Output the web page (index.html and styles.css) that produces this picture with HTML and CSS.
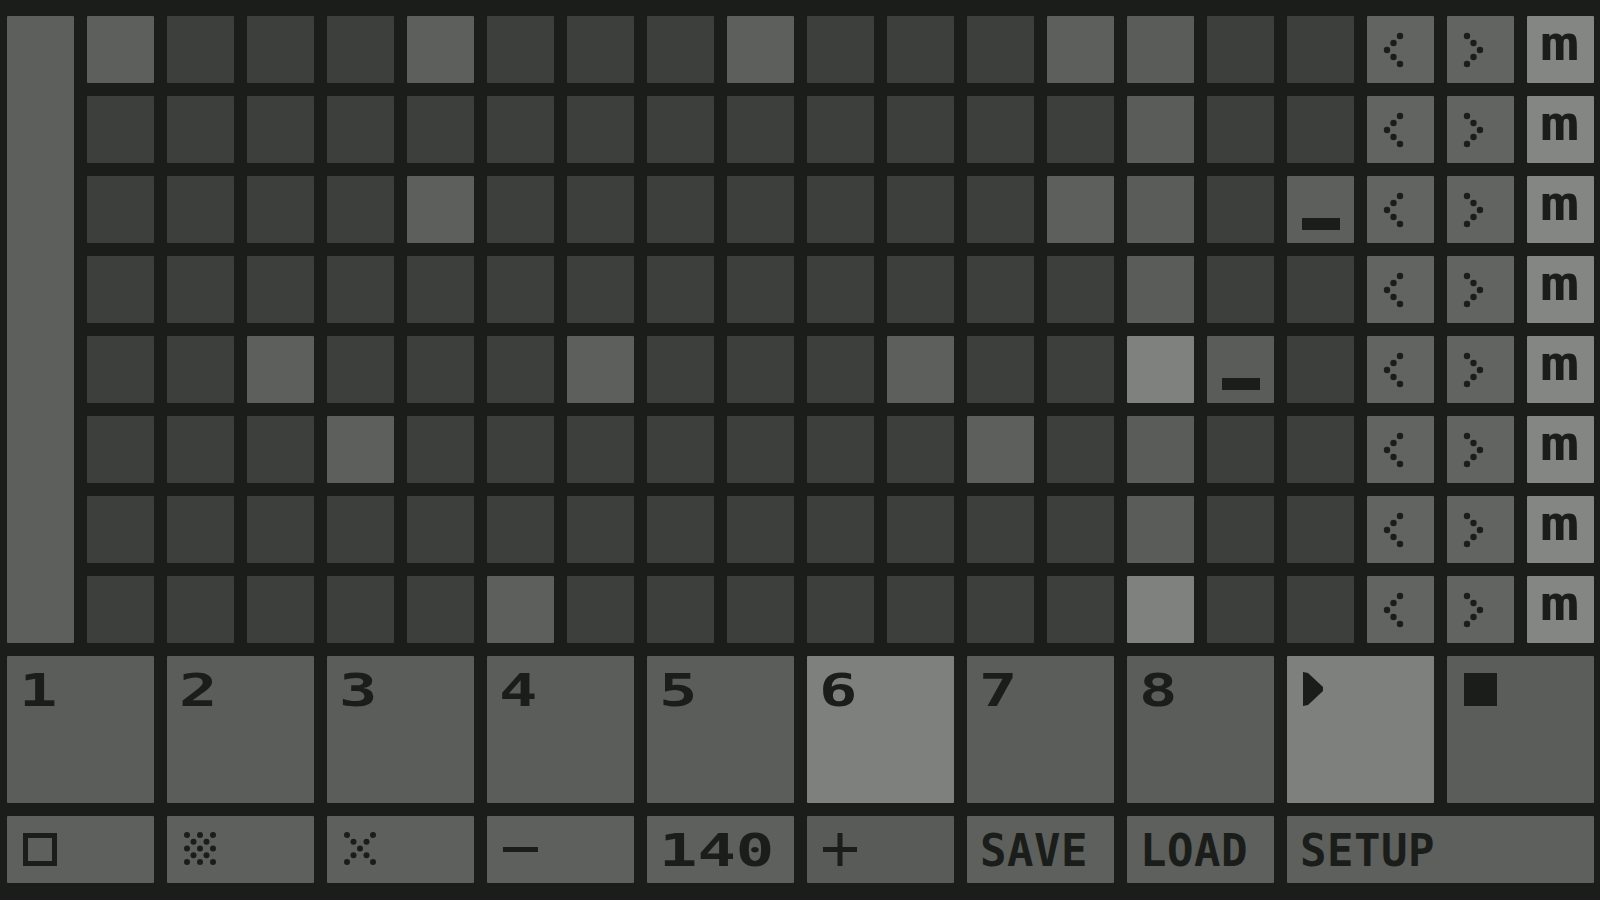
FILE: index.html
```html
<!DOCTYPE html>
<html lang="en">
<head>
<meta charset="utf-8">
<title>Sequencer</title>
<link rel="stylesheet" href="styles.css">
</head>
<body>
<main class="board">
  <div class="bar"></div>

  <!-- row 1 -->
  <div class="c on"></div><div class="c"></div><div class="c"></div><div class="c"></div>
  <div class="c on"></div><div class="c"></div><div class="c"></div><div class="c"></div>
  <div class="c on"></div><div class="c"></div><div class="c"></div><div class="c"></div>
  <div class="c on"></div><div class="c ph"></div><div class="c"></div><div class="c"></div>
  <div class="nav"><svg viewBox="0 0 67 67"><g class="dots"><circle cx="33" cy="20" r="3.2"/><circle cx="26.5" cy="27" r="3.2"/><circle cx="20" cy="34" r="3.2"/><circle cx="26.5" cy="41" r="3.2"/><circle cx="33" cy="48" r="3.2"/></g></svg></div>
  <div class="nav"><svg viewBox="0 0 67 67"><g class="dots"><circle cx="20" cy="20" r="3.2"/><circle cx="26.5" cy="27" r="3.2"/><circle cx="33" cy="34" r="3.2"/><circle cx="26.5" cy="41" r="3.2"/><circle cx="20" cy="48" r="3.2"/></g></svg></div>
  <div class="mute"><span>m</span></div>

  <!-- row 2 -->
  <div class="c"></div><div class="c"></div><div class="c"></div><div class="c"></div>
  <div class="c"></div><div class="c"></div><div class="c"></div><div class="c"></div>
  <div class="c"></div><div class="c"></div><div class="c"></div><div class="c"></div>
  <div class="c"></div><div class="c ph"></div><div class="c"></div><div class="c"></div>
  <div class="nav"><svg viewBox="0 0 67 67"><g class="dots"><circle cx="33" cy="20" r="3.2"/><circle cx="26.5" cy="27" r="3.2"/><circle cx="20" cy="34" r="3.2"/><circle cx="26.5" cy="41" r="3.2"/><circle cx="33" cy="48" r="3.2"/></g></svg></div>
  <div class="nav"><svg viewBox="0 0 67 67"><g class="dots"><circle cx="20" cy="20" r="3.2"/><circle cx="26.5" cy="27" r="3.2"/><circle cx="33" cy="34" r="3.2"/><circle cx="26.5" cy="41" r="3.2"/><circle cx="20" cy="48" r="3.2"/></g></svg></div>
  <div class="mute"><span>m</span></div>

  <!-- row 3 -->
  <div class="c"></div><div class="c"></div><div class="c"></div><div class="c"></div>
  <div class="c on"></div><div class="c"></div><div class="c"></div><div class="c"></div>
  <div class="c"></div><div class="c"></div><div class="c"></div><div class="c"></div>
  <div class="c on"></div><div class="c ph"></div><div class="c"></div><div class="c on"><i class="dash"></i></div>
  <div class="nav"><svg viewBox="0 0 67 67"><g class="dots"><circle cx="33" cy="20" r="3.2"/><circle cx="26.5" cy="27" r="3.2"/><circle cx="20" cy="34" r="3.2"/><circle cx="26.5" cy="41" r="3.2"/><circle cx="33" cy="48" r="3.2"/></g></svg></div>
  <div class="nav"><svg viewBox="0 0 67 67"><g class="dots"><circle cx="20" cy="20" r="3.2"/><circle cx="26.5" cy="27" r="3.2"/><circle cx="33" cy="34" r="3.2"/><circle cx="26.5" cy="41" r="3.2"/><circle cx="20" cy="48" r="3.2"/></g></svg></div>
  <div class="mute"><span>m</span></div>

  <!-- row 4 -->
  <div class="c"></div><div class="c"></div><div class="c"></div><div class="c"></div>
  <div class="c"></div><div class="c"></div><div class="c"></div><div class="c"></div>
  <div class="c"></div><div class="c"></div><div class="c"></div><div class="c"></div>
  <div class="c"></div><div class="c ph"></div><div class="c"></div><div class="c"></div>
  <div class="nav"><svg viewBox="0 0 67 67"><g class="dots"><circle cx="33" cy="20" r="3.2"/><circle cx="26.5" cy="27" r="3.2"/><circle cx="20" cy="34" r="3.2"/><circle cx="26.5" cy="41" r="3.2"/><circle cx="33" cy="48" r="3.2"/></g></svg></div>
  <div class="nav"><svg viewBox="0 0 67 67"><g class="dots"><circle cx="20" cy="20" r="3.2"/><circle cx="26.5" cy="27" r="3.2"/><circle cx="33" cy="34" r="3.2"/><circle cx="26.5" cy="41" r="3.2"/><circle cx="20" cy="48" r="3.2"/></g></svg></div>
  <div class="mute"><span>m</span></div>

  <!-- row 5 -->
  <div class="c"></div><div class="c"></div><div class="c on"></div><div class="c"></div>
  <div class="c"></div><div class="c"></div><div class="c on"></div><div class="c"></div>
  <div class="c"></div><div class="c"></div><div class="c on"></div><div class="c"></div>
  <div class="c"></div><div class="c hot"></div><div class="c ph"><i class="dash"></i></div><div class="c"></div>
  <div class="nav"><svg viewBox="0 0 67 67"><g class="dots"><circle cx="33" cy="20" r="3.2"/><circle cx="26.5" cy="27" r="3.2"/><circle cx="20" cy="34" r="3.2"/><circle cx="26.5" cy="41" r="3.2"/><circle cx="33" cy="48" r="3.2"/></g></svg></div>
  <div class="nav"><svg viewBox="0 0 67 67"><g class="dots"><circle cx="20" cy="20" r="3.2"/><circle cx="26.5" cy="27" r="3.2"/><circle cx="33" cy="34" r="3.2"/><circle cx="26.5" cy="41" r="3.2"/><circle cx="20" cy="48" r="3.2"/></g></svg></div>
  <div class="mute"><span>m</span></div>

  <!-- row 6 -->
  <div class="c"></div><div class="c"></div><div class="c"></div><div class="c on"></div>
  <div class="c"></div><div class="c"></div><div class="c"></div><div class="c"></div>
  <div class="c"></div><div class="c"></div><div class="c"></div><div class="c on"></div>
  <div class="c"></div><div class="c ph"></div><div class="c"></div><div class="c"></div>
  <div class="nav"><svg viewBox="0 0 67 67"><g class="dots"><circle cx="33" cy="20" r="3.2"/><circle cx="26.5" cy="27" r="3.2"/><circle cx="20" cy="34" r="3.2"/><circle cx="26.5" cy="41" r="3.2"/><circle cx="33" cy="48" r="3.2"/></g></svg></div>
  <div class="nav"><svg viewBox="0 0 67 67"><g class="dots"><circle cx="20" cy="20" r="3.2"/><circle cx="26.5" cy="27" r="3.2"/><circle cx="33" cy="34" r="3.2"/><circle cx="26.5" cy="41" r="3.2"/><circle cx="20" cy="48" r="3.2"/></g></svg></div>
  <div class="mute"><span>m</span></div>

  <!-- row 7 -->
  <div class="c"></div><div class="c"></div><div class="c"></div><div class="c"></div>
  <div class="c"></div><div class="c"></div><div class="c"></div><div class="c"></div>
  <div class="c"></div><div class="c"></div><div class="c"></div><div class="c"></div>
  <div class="c"></div><div class="c ph"></div><div class="c"></div><div class="c"></div>
  <div class="nav"><svg viewBox="0 0 67 67"><g class="dots"><circle cx="33" cy="20" r="3.2"/><circle cx="26.5" cy="27" r="3.2"/><circle cx="20" cy="34" r="3.2"/><circle cx="26.5" cy="41" r="3.2"/><circle cx="33" cy="48" r="3.2"/></g></svg></div>
  <div class="nav"><svg viewBox="0 0 67 67"><g class="dots"><circle cx="20" cy="20" r="3.2"/><circle cx="26.5" cy="27" r="3.2"/><circle cx="33" cy="34" r="3.2"/><circle cx="26.5" cy="41" r="3.2"/><circle cx="20" cy="48" r="3.2"/></g></svg></div>
  <div class="mute"><span>m</span></div>

  <!-- row 8 -->
  <div class="c"></div><div class="c"></div><div class="c"></div><div class="c"></div>
  <div class="c"></div><div class="c on"></div><div class="c"></div><div class="c"></div>
  <div class="c"></div><div class="c"></div><div class="c"></div><div class="c"></div>
  <div class="c"></div><div class="c hot"></div><div class="c"></div><div class="c"></div>
  <div class="nav"><svg viewBox="0 0 67 67"><g class="dots"><circle cx="33" cy="20" r="3.2"/><circle cx="26.5" cy="27" r="3.2"/><circle cx="20" cy="34" r="3.2"/><circle cx="26.5" cy="41" r="3.2"/><circle cx="33" cy="48" r="3.2"/></g></svg></div>
  <div class="nav"><svg viewBox="0 0 67 67"><g class="dots"><circle cx="20" cy="20" r="3.2"/><circle cx="26.5" cy="27" r="3.2"/><circle cx="33" cy="34" r="3.2"/><circle cx="26.5" cy="41" r="3.2"/><circle cx="20" cy="48" r="3.2"/></g></svg></div>
  <div class="mute"><span>m</span></div>

  <!-- pattern pads -->
  <div class="pad"><span class="num">1</span></div>
  <div class="pad"><span class="num">2</span></div>
  <div class="pad"><span class="num">3</span></div>
  <div class="pad"><span class="num">4</span></div>
  <div class="pad"><span class="num">5</span></div>
  <div class="pad lit"><span class="num">6</span></div>
  <div class="pad"><span class="num">7</span></div>
  <div class="pad"><span class="num">8</span></div>
  <div class="pad lit"><svg class="ico" viewBox="0 0 67 67"><polygon class="ink" points="16,16 21,17 36,31 36,35 21,49 16,50"/></svg></div>
  <div class="pad"><svg class="ico" viewBox="0 0 67 67"><rect class="ink" x="17" y="17" width="33" height="33"/></svg></div>

  <!-- tool row -->
  <div class="tool"><svg class="ico" viewBox="0 0 67 67"><rect class="line" x="18.5" y="19.5" width="29" height="28"/></svg></div>
  <div class="tool"><svg class="ico" viewBox="0 0 67 67"><g class="dots">
    <circle cx="20" cy="19" r="3"/><circle cx="33" cy="19" r="3"/><circle cx="46" cy="19" r="3"/>
    <circle cx="26.5" cy="25.75" r="3"/><circle cx="39.5" cy="25.75" r="3"/>
    <circle cx="20" cy="32.5" r="3"/><circle cx="33" cy="32.5" r="3"/><circle cx="46" cy="32.5" r="3"/>
    <circle cx="26.5" cy="39.25" r="3"/><circle cx="39.5" cy="39.25" r="3"/>
    <circle cx="20" cy="46" r="3"/><circle cx="33" cy="46" r="3"/><circle cx="46" cy="46" r="3"/>
  </g></svg></div>
  <div class="tool"><svg class="ico" viewBox="0 0 67 67"><g class="dots">
    <circle cx="20" cy="19" r="3"/><circle cx="46" cy="19" r="3"/>
    <circle cx="26.5" cy="25.75" r="3"/><circle cx="39.5" cy="25.75" r="3"/>
    <circle cx="33" cy="32.5" r="3"/>
    <circle cx="26.5" cy="39.25" r="3"/><circle cx="39.5" cy="39.25" r="3"/>
    <circle cx="20" cy="46" r="3"/><circle cx="46" cy="46" r="3"/>
  </g></svg></div>
  <div class="tool"><svg class="ico" viewBox="0 0 67 67"><rect class="ink" x="16" y="31" width="35" height="5"/></svg></div>
  <div class="tool"><span class="num">140</span></div>
  <div class="tool dim"><svg class="ico" viewBox="0 0 67 67"><rect class="ink" x="16" y="31" width="34" height="5"/><rect class="ink" x="30.5" y="17" width="5" height="33"/></svg></div>
  <div class="tool"><span class="word">SAVE</span></div>
  <div class="tool"><span class="word">LOAD</span></div>
  <div class="tool wide"><span class="word">SETUP</span></div>
</main>
</body>
</html>
```
FILE: styles.css
```css
* { box-sizing: border-box; }

html, body {
  margin: 0;
  background: #1b1d1a;
}

body {
  width: 1600px;
  height: 900px;
  overflow: hidden;
  font-family: "DejaVu Sans Mono", "Liberation Mono", monospace;
  color: #1b1d1a;
}

.board {
  display: grid;
  grid-template-columns: repeat(20, 67px);
  grid-template-rows: repeat(11, 67px);
  gap: 13px;
  padding: 16px 0 0 7px;
}

.bar {
  grid-column: 1;
  grid-row: 1 / span 8;
  background: #5d5f5c;
  border-radius: 1px;
}

.c {
  background: #3d3f3c;
  border-radius: 1px;
  display: flex;
  align-items: flex-start;
}

.c.on { background: #5d5f5c; }
.c.ph { background: #5a5c59; }
.c.hot { background: #7f817e; }

.dash {
  display: block;
  width: 38px;
  height: 12px;
  margin: 42px 0 0 15px;
  background: #1b1d1a;
}

.nav {
  background: #626461;
  border-radius: 1px;
}

.nav svg,
.ico {
  display: block;
  width: 67px;
  height: 67px;
}

.dots circle,
.ink { fill: #1b1d1a; }

.line {
  fill: none;
  stroke: #1b1d1a;
  stroke-width: 5;
}

.mute {
  background: #848683;
  border-radius: 1px;
  padding: 3px 0 0 13px;
  font-weight: bold;
  font-size: 48px;
  line-height: 48px;
}

.mute span {
  display: inline-block;
  transform: scaleX(1.36);
  transform-origin: left center;
}

.pad {
  grid-column: span 2;
  grid-row: span 2;
  background: #5b5d5a;
  border-radius: 1px;
}

.pad.lit { background: #7e807d; }

.pad .num,
.tool .num,
.tool .word {
  display: inline-block;
  font-weight: bold;
  font-size: 44px;
  line-height: 44px;
  padding-top: 13px;
}

.num {
  transform: scaleX(1.45);
  transform-origin: left top;
  margin-left: 12px;
}

.tool {
  grid-column: span 2;
  background: #5e605d;
  border-radius: 1px;
}

.tool.dim { background: #595b58; }
.tool.wide { grid-column: span 4; }

.word {
  margin-left: 13px;
  letter-spacing: 0.5px;
}
```
